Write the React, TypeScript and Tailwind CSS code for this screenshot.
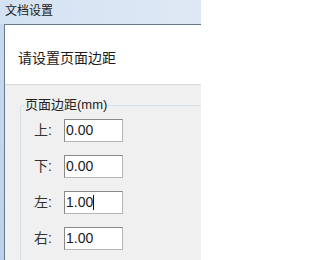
import React from 'react';

const font = { fontFamily: '"Liberation Sans", "Noto Sans CJK SC", sans-serif' };

// 页边距的四个输入
const rows = [
    { label: '上', value: '0.00' },
    { label: '下', value: '0.00' },
    { label: '左', value: '1.00', caret: true },
    { label: '右', value: '1.00' },
];

const App = () => {
    return (
        <div
            className="w-[201px] h-[260px] overflow-hidden flex flex-col bg-gradient-to-b from-[#c9daee] to-[#bcd1e9] text-[#1b1b1b]"
            style={font}
        >
            {/* 标题栏 */}
            <div className="h-[24px] shrink-0 flex items-center pl-[5px] pb-[2px] text-[12px] bg-gradient-to-r from-[#d3e2f2] to-[#dfe9f5]">
                文档设置
            </div>

            {/* 窗口内容 */}
            <div className="flex-1 ml-[4px] border-l border-t border-[#66788e] flex flex-col">
                <div className="h-[60px] shrink-0 bg-white border-b border-[#d9d9d9] pl-[13px] pt-[25px] text-[14px] leading-[16px]">
                    请设置页面边距
                </div>
                <div className="flex-1 bg-[#f0f0f0] pl-[15px] pt-[12px]">
                    <fieldset className="border border-[#d5dfe5] rounded-[3px] w-[260px] h-[200px]">
                        <legend className="ml-[3px] px-[1px] text-[13px] leading-[16px] text-[#222]">页面边距(mm)</legend>
                        <div className="flex flex-col gap-[13px] pt-[6px] pl-[13px]">
                            {rows.map((row) => (
                                <div key={row.label} className="flex items-center">
                                    <span className="w-[30px] text-[14px] text-[#333]">{row.label}:</span>
                                    <div className="w-[59px] h-[23px] bg-white border border-[#8a8a8a] border-b-[#b5b5b5] border-r-[#b5b5b5] flex items-center pl-[1px] text-[14px]">
                                        <span>{row.value}</span>
                                        {row.caret && <span className="w-px h-[15px] bg-[#111]" />}
                                    </div>
                                </div>
                            ))}
                        </div>
                    </fieldset>
                </div>
            </div>
        </div>
    );
};

export default App;
